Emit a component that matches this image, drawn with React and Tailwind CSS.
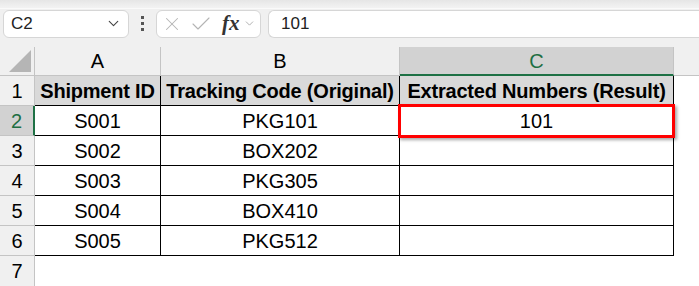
import { ChevronDown, X, Check } from "lucide-react";

const COLS = [
  { key: "A", w: 126 },
  { key: "B", w: 239 },
  { key: "C", w: 274 },
];

const ROWS = [
  ["Shipment ID", "Tracking Code (Original)", "Extracted Numbers (Result)"],
  ["S001", "PKG101", "101"],
  ["S002", "BOX202", ""],
  ["S003", "PKG305", ""],
  ["S004", "BOX410", ""],
  ["S005", "PKG512", ""],
];

const font = { fontFamily: '"Liberation Sans", Arial, sans-serif' };

function FormulaBar() {
  return (
    <div className="bg-[#f0f0f0]">
      <div className="h-[9px] bg-gradient-to-b from-[#e6e6e6] to-[#f3f3f3] border-b border-[#fafafa]" />
      <div className="flex items-center h-[29px] pl-[3px]">
        <div className="flex items-center justify-between w-[126px] h-[28px] bg-white border border-[#d6d6d6] rounded-md pl-[7px] pr-[6px]">
          <span className="text-[17px] text-[#222]">C2</span>
          <ChevronDown size={17} strokeWidth={1.6} className="text-[#444]" />
        </div>
        <div className="flex flex-col gap-[3px] items-center w-[27px]">
          <span className="w-[3px] h-[3px] bg-[#555]" />
          <span className="w-[3px] h-[3px] bg-[#555]" />
          <span className="w-[3px] h-[3px] bg-[#555]" />
        </div>
        <div className="flex items-center w-[105px] h-[28px] bg-white border border-[#d6d6d6] rounded-md pl-[4px]">
          <X size={22} strokeWidth={1.1} className="text-[#b4b4b4]" />
          <Check size={24} strokeWidth={1.1} className="text-[#b4b4b4] ml-[6px]" />
          <span
            className="ml-[9px] text-[21px] italic font-bold text-[#333] leading-none"
            style={{ fontFamily: '"Liberation Serif", serif' }}
          >
            fx
          </span>
          <ChevronDown size={13} strokeWidth={1.4} className="text-[#999] ml-[3px]" />
        </div>
        <div className="flex items-center flex-1 h-[28px] bg-white border border-[#d6d6d6] rounded-l-md border-r-0 ml-[7px] pl-[12px]">
          <span className="text-[17px] text-[#222]">101</span>
        </div>
      </div>
      <div className="h-[9px]" />
    </div>
  );
}

export default function App() {
  return (
    <div className="relative w-[699px] h-[286px] overflow-hidden bg-white select-none" style={font}>
      <FormulaBar />
      {/* column headers */}
      <div className="flex h-[29px] bg-[#f0f0f0] border-b border-[#c4c4c4]">
        <div className="w-[35px] shrink-0 relative border-r border-[#c4c4c4]">
          <svg className="absolute right-[3px] bottom-[3px]" width="22" height="22" viewBox="0 0 22 22">
            <polygon points="22,0 22,22 0,22" fill="#b5b5b5" />
          </svg>
        </div>
        {COLS.map((c) => (
          <div
            key={c.key}
            style={{ width: c.w }}
            className={
              c.key === "C"
                ? "shrink-0 flex items-center justify-center text-[20px] text-[#1e6f43] bg-[#d2d2d2] border-b-2 border-[#1e7145] border-r border-r-[#c4c4c4] mb-[-1px]"
                : "shrink-0 flex items-center justify-center text-[20px] text-black border-r border-[#c4c4c4]"
            }
          >
            {c.key}
          </div>
        ))}
        <div className="flex-1" />
      </div>
      {/* rows */}
      {ROWS.map((r, i) => {
        const n = i + 1;
        const header = n === 1;
        return (
          <div key={n} className="flex h-[30px]">
            <div
              className={
                n === 2
                  ? "w-[35px] shrink-0 flex items-center justify-center text-[20px] text-[#1e6f43] bg-[#d2d2d2] border-r-2 border-[#1e7145] border-b border-b-[#c4c4c4]"
                  : "w-[35px] shrink-0 flex items-center justify-center text-[20px] text-black bg-[#f0f0f0] border-r border-[#c4c4c4] border-b border-b-[#c4c4c4]"
              }
            >
              {n}
            </div>
            {r.map((v, j) => (
              <div
                key={j}
                style={{ width: COLS[j].w }}
                className={
                  header
                    ? "shrink-0 flex items-center justify-center whitespace-nowrap text-[20px] font-bold tracking-[-0.2px] text-black bg-[#d9d9d9] border-r border-b border-black"
                    : "shrink-0 flex items-center justify-center whitespace-nowrap text-[20px] text-black border-r border-b border-black"
                }
              >
                {v}
              </div>
            ))}
            <div className="flex-1" />
          </div>
        );
      })}
      <div className="flex h-[30px]">
        <div className="w-[35px] shrink-0 flex items-center justify-center text-[20px] text-black bg-[#f0f0f0] border-r border-[#c4c4c4]">
          7
        </div>
      </div>
      {/* selection highlight */}
      <div className="absolute left-[398px] top-[104px] w-[277px] h-[34px] border-[3px] border-[#ff0000] shadow-[2px_2px_3px_rgba(0,0,0,0.35)]" />
    </div>
  );
}
